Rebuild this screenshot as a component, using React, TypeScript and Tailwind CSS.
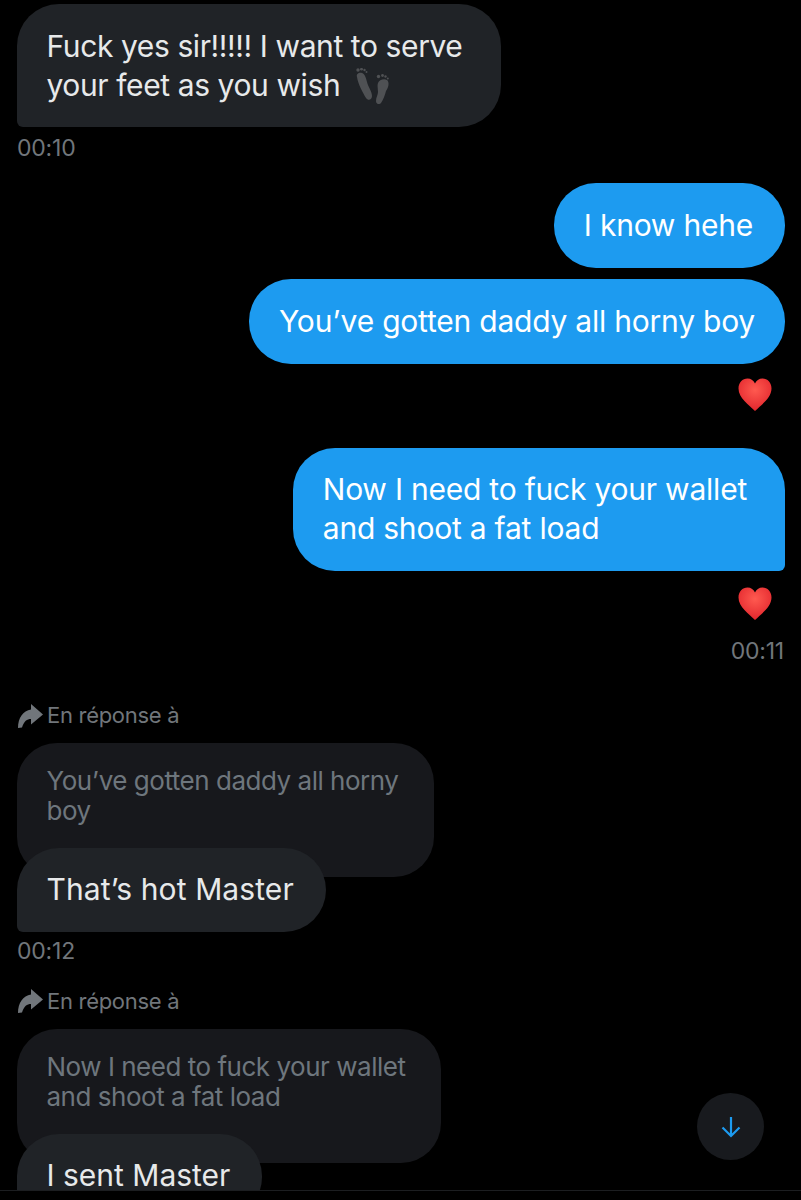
const font = { fontFamily: '"Inter", "Liberation Sans", sans-serif' };

const Heart = () => (
  <svg width="36" height="36" viewBox="0 0 36 36" className="block">
    <defs>
      <radialGradient id="heartFill" cx="50%" cy="35%" r="70%">
        <stop offset="0%" stopColor="#ff5a50" />
        <stop offset="100%" stopColor="#e0222a" />
      </radialGradient>
    </defs>
    <path
      d="M18 34C12 28 1.500 21 1.500 11.500 1.500 5.500 5.500 1.500 10.500 1.500 14 1.500 16.800 3.500 18 6.500 19.200 3.500 22 1.500 25.500 1.500 30.500 1.500 34.500 5.500 34.500 11.500 34.500 21 24 28 18 34Z"
      fill="url(#heartFill)"
    />
  </svg>
);

const Feet = () => (
  <svg width="36" height="36" viewBox="0 0 36 36" className="inline-block align-[-8px] ml-[6px]" fill="#4f5154">
    <path d="M3 9c-1-3 2-5 5-4 3 1 4 5 5 9 1 5 5 9 5 14 0 4-4 5-6 2C9 25 4 16 3 9z" />
    <circle cx="4" cy="2" r="1.700" />
    <circle cx="7.500" cy="1.200" r="1.400" />
    <circle cx="10.500" cy="2" r="1.200" />
    <circle cx="12.500" cy="4" r="1" />
    <path d="M24 15c1-3 6-5 9-3 3 3 1 8-1 11-1 4-3 9-5 12-2 2-5 1-5-2 0-4 2-6 2-9 0-3-1-6 0-9z" />
    <circle cx="24.500" cy="8.500" r="1.700" />
    <circle cx="28.500" cy="7.500" r="1.400" />
    <circle cx="31.500" cy="8.500" r="1.200" />
    <circle cx="33.800" cy="10.500" r="1" />
  </svg>
);

const ReplyLabel = () => (
  <div className="flex items-center h-[30px] text-[#71767b] text-[22px] tracking-[-0.3px]">
    <svg width="26" height="26" viewBox="0 0 26 26" fill="#71767b" className="mr-[4px] ml-[1px]">
      <path d="M14 1 26 11.500 14 21.500V16C10 16 7 18 5 24.500L1 25C1 15 6 7.500 14 6.500Z" />
    </svg>
    <span>En réponse à</span>
  </div>
);

const Time = ({ children, right }: { children: string; right?: boolean }) => (
  <div className={`text-[23px] leading-[30px] tracking-[-0.2px] text-[#71767b] ${right ? "text-right" : ""}`}>{children}</div>
);

const Sent = ({ children, className }: { children: React.ReactNode; className?: string }) => (
  <div className={`w-fit ml-auto bg-[#1d9bf0] text-white text-[30px] leading-[38.5px] tracking-[-0.22px] pl-[30px] pt-[22.500px] pb-[23.500px] rounded-[42px] ${className ?? ""}`}>
    {children}
  </div>
);

const Received = ({ children, className }: { children: React.ReactNode; className?: string }) => (
  <div className={`relative w-fit bg-[#202327] text-[#e7e9ea] text-[30px] leading-[38.5px] pl-[29.500px] pr-[32px] rounded-[42px] rounded-bl-[6px] ${className ?? ""}`}>
    {children}
  </div>
);

const Quoted = ({ children, width }: { children: React.ReactNode; width: string }) => (
  <div className={`${width} h-[134px] bg-[#17181c] text-[#6e767d] text-[26px] leading-[30px] tracking-[-0.48px] pl-[29.500px] pt-[23px] rounded-[40px]`}>
    {children}
  </div>
);

export default function App() {
  return (
    <div className="relative w-[801px] h-[1200px] bg-black overflow-hidden" style={font}>
      <div className="h-[1191px] overflow-hidden border-b border-[#1c1e21] pt-[4px] px-[16px]">
        <Received className="min-w-[484px] ml-px py-[23px] tracking-[-0.4px]">
          Fuck yes sir!!!!! I want to serve
          <br />
          your feet as you wish <Feet />
        </Received>
        <div className="mt-[6px] ml-px"><Time>00:10</Time></div>

        <Sent className="mt-[20px] pr-[32px]">I know hehe</Sent>
        <Sent className="mt-[11.500px] pr-[30px]">You’ve gotten daddy all horny boy</Sent>
        <div className="flex justify-end mt-[13px] mr-[12px]"><Heart /></div>
        <Sent className="mt-[35px] pr-[38px] rounded-br-[6px]">
          Now I need to fuck your wallet
          <br />
          and shoot a fat load
        </Sent>
        <div className="flex justify-end mt-[15px] mr-[12px]"><Heart /></div>
        <div className="mt-[14px] mr-[1px]"><Time right>00:11</Time></div>

        <div className="mt-[35px]"><ReplyLabel /></div>
        <div className="mt-[12px] ml-px">
          <Quoted width="w-[417px]">
            You’ve gotten daddy all horny
            <br />
            boy
          </Quoted>
          <Received className="-mt-[29px] pt-[22px] pb-[24px] tracking-[0.1px]">That’s hot Master</Received>
        </div>
        <div className="mt-[4px] ml-px"><Time>00:12</Time></div>

        <div className="mt-[20px]"><ReplyLabel /></div>
        <div className="mt-[13px] ml-px">
          <Quoted width="w-[424px]">
            Now I need to fuck your wallet
            <br />
            and shoot a fat load
          </Quoted>
          <Received className="-mt-[29px] pt-[22px] pb-[24px] tracking-[0px]">I sent Master</Received>
        </div>
      </div>

      {/* scroll to bottom */}
      <div className="absolute left-[697px] top-[1093px] w-[67px] h-[67px] rounded-full bg-[#181a1e] flex items-center justify-center">
        <svg width="20" height="22" viewBox="0 0 20 22" fill="none" stroke="#1d9bf0" strokeWidth="2.200">
          <path d="M10 1v19M1.500 11.500 10 20l8.500-8.500" />
        </svg>
      </div>
    </div>
  );
}
